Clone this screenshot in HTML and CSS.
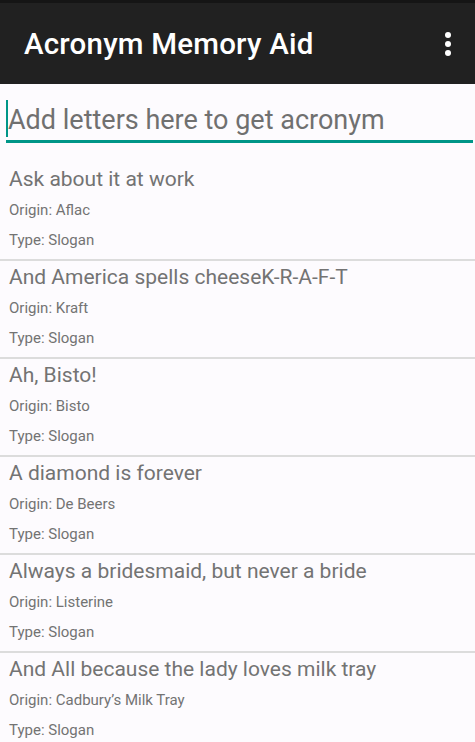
FILE: index.html
```
<!DOCTYPE html>
<html>
<head>
<meta charset="utf-8">
<link rel="stylesheet" href="styles.css">
</head>
<body>
<div class="status"></div>
<header class="appbar">
  <h1 class="title">Acronym Memory Aid</h1>
  <div class="menu" aria-label="More options">
    <svg width="8" height="26" viewBox="0 0 8 26"><circle cx="4" cy="4" r="3" fill="#fff"/><circle cx="4" cy="13" r="3" fill="#fff"/><circle cx="4" cy="22" r="3" fill="#fff"/></svg>
  </div>
</header>
<div class="field">
  <span class="cursor"></span>
  <span class="placeholder">Add letters here to get acronym</span>
</div>
<ul class="list">
  <li class="item"><div class="name">Ask about it at work</div><div class="meta">Origin: Aflac</div><div class="meta">Type: Slogan</div></li>
  <li class="item"><div class="name">And America spells cheeseK-R-A-F-T</div><div class="meta">Origin: Kraft</div><div class="meta">Type: Slogan</div></li>
  <li class="item"><div class="name">Ah, Bisto!</div><div class="meta">Origin: Bisto</div><div class="meta">Type: Slogan</div></li>
  <li class="item"><div class="name">A diamond is forever</div><div class="meta">Origin: De Beers</div><div class="meta">Type: Slogan</div></li>
  <li class="item"><div class="name">Always a bridesmaid, but never a bride</div><div class="meta">Origin: Listerine</div><div class="meta">Type: Slogan</div></li>
  <li class="item"><div class="name">And All because the lady loves milk tray</div><div class="meta">Origin: Cadbury’s Milk Tray</div><div class="meta">Type: Slogan</div></li>
</ul>
</body>
</html>
```
FILE: styles.css
```
* { box-sizing: border-box; }
html, body { margin: 0; padding: 0; }
body {
  background: #fdfbfe;
  font-family: Roboto, "Liberation Sans", sans-serif;
  width: 475px;
  height: 742px;
  overflow: hidden;
}
.status { height: 3px; background: #151515; }
.appbar {
  height: 81px;
  background: #212121;
  display: flex;
  align-items: center;
  justify-content: space-between;
  padding: 0 24px 0 24px;
}
.title {
  margin: 0;
  color: #fff;
  font-size: 29.5px;
  font-weight: 500;
  letter-spacing: 0.2px;
}
.menu { display: flex; align-items: center; margin-right: -1px; }
.menu svg { display: block; }
.field {
  margin: 16px 2px 0 6px;
  height: 43px;
  border-bottom: 3px solid #009688;
  display: flex;
  align-items: flex-start;
}
.cursor {
  width: 2px;
  height: 37px;
  background: #009688;
  flex: none;
}
.placeholder {
  color: #707070;
  font-size: 27px;
  line-height: 37px;
  padding-top: 2px;
  white-space: nowrap;
}
.list { list-style: none; margin: 20px 0 0 0; padding: 0; }
.item {
  height: 98px;
  border-bottom: 2px solid #dcdcdc;
  padding: 4px 9px 0 9px;
}
.name {
  color: #737373;
  font-size: 21px;
  line-height: 24px;
  margin-bottom: 11px;
}
.meta {
  color: #737373;
  font-size: 15px;
  line-height: 17px;
  margin-bottom: 13px;
}
```
